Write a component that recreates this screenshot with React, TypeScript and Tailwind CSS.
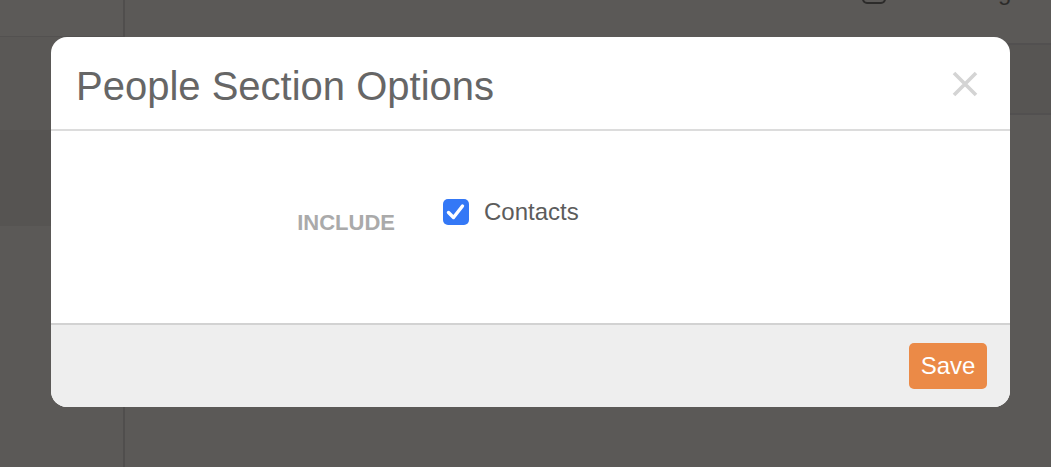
import React from "react";

function CheckIcon() {
  return (
    <svg viewBox="0 0 26 26" className="h-[26px] w-[26px]">
      <rect x="0" y="0" width="26" height="26" rx="5" fill="#3478f6" />
      <path d="M5.5 13.5 L10.5 18.5 L19.5 7" fill="none" stroke="#fff" strokeWidth="3.4" strokeLinecap="round" strokeLinejoin="round" />
    </svg>
  );
}

function CloseIcon() {
  return (
    <svg viewBox="0 0 26 26" className="h-[26px] w-[26px]">
      <path d="M2 2 L24 24 M24 2 L2 24" stroke="#d4d4d4" strokeWidth="3.6" strokeLinecap="butt" />
    </svg>
  );
}

export default function App() {
  return (
    <div className="relative h-[467px] w-full overflow-hidden bg-[#5b5957] font-['Liberation_Sans',Arial,sans-serif]">
      {/* dimmed page behind the dialog */}
      <div className="flex h-full">
        <aside className="flex w-[125px] flex-col border-r-2 border-[#504e4d]">
          <div className="h-[37px] border-b border-[#535150] bg-[#5c5a58]" />
          <div className="h-[93px] bg-[#5a5856]" />
          <div className="h-[96px] bg-[#565452]" />
          <div className="flex-1 bg-[#5b5957]" />
        </aside>
        <main className="flex flex-1 flex-col">
          <div className="h-[45px] overflow-hidden border-b-2 border-[#525050] bg-[#5b5957]">
            <div className="-mt-[20px] flex items-center gap-[8px] pl-[737px]">
              <div className="h-[24px] w-[24px] rounded-[5px] border-2 border-[#2c2b2a]" />
              <span className="text-[24px] leading-[24px] text-[#2c2b2a]">Hide sizing</span>
            </div>
          </div>
          <div className="h-[70px] border-b-2 border-[#525050] bg-[#575553]" />
          <div className="flex-1" />
        </main>
      </div>

      {/* dialog */}
      <div className="absolute left-[51px] top-[37px] w-[959px] overflow-hidden rounded-2xl bg-white">
        <div className="flex h-[94px] items-center justify-between border-b-2 border-[#dcdcdc] pl-[25px] pr-[32px] pt-[5px]">
          <h1 className="text-[40px] leading-[48px] text-[#666666]">People Section Options</h1>
          <div className="-mt-[3px]">
            <CloseIcon />
          </div>
        </div>

        <div className="flex h-[194px] items-start border-b-2 border-[#d2d2d2]">
          <div className="w-[344px] pt-[79px] text-right text-[22px] font-bold leading-[26px] text-[#aaaaaa]">
            INCLUDE
          </div>
          <div className="ml-[48px] flex items-center gap-[15px] pt-[68px]">
            <CheckIcon />
            <span className="text-[24px] leading-[26px] text-[#5c5c5c]">Contacts</span>
          </div>
        </div>

        <div className="flex h-[82px] items-center justify-end bg-[#eeeeee] pr-[23px]">
          <button className="h-[46px] w-[78px] rounded-[5px] bg-[#eb8a47] text-[24px] leading-[26px] text-white">
            Save
          </button>
        </div>
      </div>
    </div>
  );
}
